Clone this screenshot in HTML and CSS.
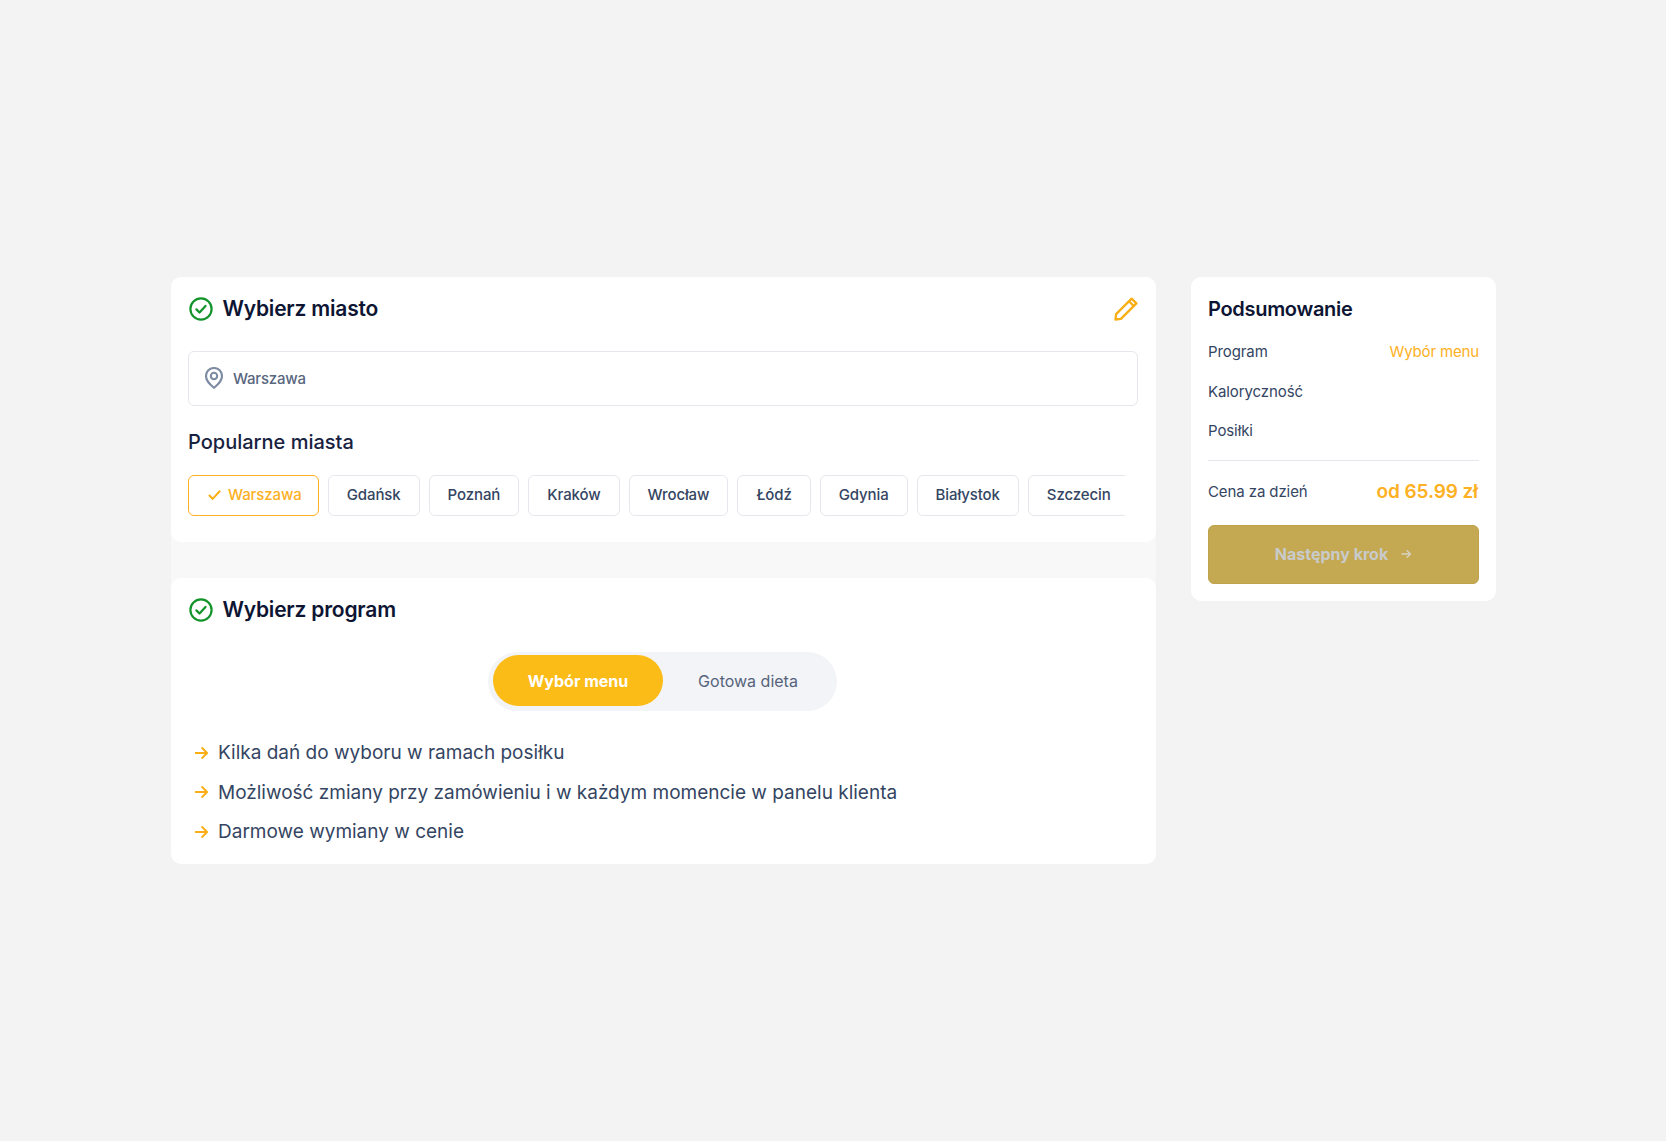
FILE: index.html
```html
<!DOCTYPE html>
<html lang="pl">
<head>
<meta charset="utf-8">
<title>Wybierz miasto</title>
<link rel="stylesheet" href="styles.css">
</head>
<body>
<div class="page">
  <main class="steps">
    <section class="card city">
      <header class="card-head">
        <svg class="check" viewBox="0 0 24 24" fill="none"><circle cx="12" cy="12" r="10.6"/><path d="M7.4 12.4l3.1 3.1 6-6.6"/></svg>
        <h2>Wybierz miasto</h2>
        <svg class="pencil" viewBox="0 0 24 24" fill="none"><path d="M1.5 22.5l.6-5.4L17.6 1.6l4.8 4.8L6.9 21.9z"/><path d="M15 4.2l4.8 4.8"/></svg>
      </header>
      <div class="search">
        <svg class="pin" viewBox="0 0 18 22" fill="none"><path d="M9 20.8C5 17.4 1 14.2 1 9a8 8 0 0 1 16 0c0 5.2-4 8.4-8 11.8z"/><circle cx="9" cy="9" r="3.2"/></svg>
        <span>Warszawa</span>
      </div>
      <h3>Popularne miasta</h3>
      <div class="chips">
        <span class="chip active"><svg viewBox="0 0 16 16" fill="none"><path d="M2 8.6l4 4L14 4"/></svg>Warszawa</span>
        <span class="chip">Gdańsk</span>
        <span class="chip">Poznań</span>
        <span class="chip">Kraków</span>
        <span class="chip">Wrocław</span>
        <span class="chip">Łódź</span>
        <span class="chip">Gdynia</span>
        <span class="chip">Białystok</span>
        <span class="chip">Szczecin</span>
      </div>
    </section>
    <section class="card program">
      <header class="card-head">
        <svg class="check" viewBox="0 0 24 24" fill="none"><circle cx="12" cy="12" r="10.6"/><path d="M7.4 12.4l3.1 3.1 6-6.6"/></svg>
        <h2>Wybierz program</h2>
      </header>
      <div class="toggle-row">
        <div class="toggle">
          <span class="tab on">Wybór menu</span>
          <span class="tab">Gotowa dieta</span>
        </div>
      </div>
      <ul class="perks">
        <li><svg viewBox="0 0 14 14" fill="none"><path d="M1 7h12M7.6 1.4L13 7l-5.4 5.6"/></svg>Kilka dań do wyboru w ramach posiłku</li>
        <li><svg viewBox="0 0 14 14" fill="none"><path d="M1 7h12M7.6 1.4L13 7l-5.4 5.6"/></svg>Możliwość zmiany przy zamówieniu i w każdym momencie w panelu klienta</li>
        <li><svg viewBox="0 0 14 14" fill="none"><path d="M1 7h12M7.6 1.4L13 7l-5.4 5.6"/></svg>Darmowe wymiany w cenie</li>
      </ul>
    </section>
  </main>
  <aside class="card summary">
    <h2>Podsumowanie</h2>
    <div class="row"><span>Program</span><span class="accent">Wybór menu</span></div>
    <div class="row"><span>Kaloryczność</span></div>
    <div class="row"><span>Posiłki</span></div>
    <div class="price"><span>Cena za dzień</span><strong>od 65.99 zł</strong></div>
    <div class="next">Następny krok<svg viewBox="0 0 12 12" fill="none"><path d="M1.5 6h9M6.6 2.2L10.5 6 6.6 9.8"/></svg></div>
  </aside>
</div>
</body>
</html>
```
FILE: styles.css
```css
* { box-sizing: border-box; }
html, body { margin: 0; height: 100%; }
body {
  background: #f3f3f3;
  font-family: Inter, "Noto Sans", sans-serif;
  color: #344054;
}
h2, h3, ul { margin: 0; padding: 0; }
.page {
  display: flex;
  align-items: flex-start;
  gap: 35px;
  padding: 277px 170px 0 171px;
}
.steps {
  width: 985px;
  flex: none;
  display: flex;
  flex-direction: column;
  gap: 36px;
  background: #f8f8f8;
  border-radius: 10px;
}
.card { background: #fff; border-radius: 10px; }
.city { height: 265px; padding: 17px 18px 0 17px; }
.program { height: 286px; padding: 17px 18px 0 17px; }
.card-head {
  display: flex;
  align-items: center;
  height: 30px;
}
.card-head h2 {
  font-size: 21px;
  line-height: 30px;
  font-weight: 600;
  color: #0d1533;
  margin-left: 9.5px;
  letter-spacing: -.2px;
}
.check { width: 24px; height: 24px; margin-left: 1px; }
.check circle, .check path { stroke: #12942b; stroke-width: 2.2; stroke-linecap: round; stroke-linejoin: round; }
.pencil { width: 24px; height: 24px; margin-left: auto; }
.pencil path { stroke: #f9ae14; stroke-width: 2.3; stroke-linejoin: round; }
.search {
  display: flex;
  align-items: center;
  height: 55px;
  margin-top: 27px;
  padding-left: 16px;
  padding-bottom: 1px;
  border: 1px solid #e4e7ec;
  border-radius: 6px;
  font-size: 15px;
  font-weight: 500;
  letter-spacing: -.2px;
  color: #58667e;
}
.pin { width: 18px; height: 22px; margin-right: 10px; }
.pin path, .pin circle { stroke: #7d8ba3; stroke-width: 2.1; }
.city h3 {
  font-size: 20px;
  line-height: 28px;
  font-weight: 500;
  color: #17223f;
  margin-top: 22px;
}
.chips {
  display: flex;
  gap: 9px;
  width: 937px;
  margin-top: 19px;
  overflow: hidden;
}
.chip {
  flex: none;
  display: flex;
  align-items: center;
  justify-content: center;
  height: 41px;
  padding: 0 18px 2px;
  border: 1px solid #e4e7ec;
  border-radius: 6px;
  font-size: 15px;
  font-weight: 500;
  letter-spacing: -.1px;
  color: #344562;
}
.chip.active { border: 1.5px solid #fdb022; color: #fdb022; padding: 0 16px 2px 18px; }
.chip svg { width: 15px; height: 15px; margin-right: 6px; }
.chip svg path { stroke: #f9ae14; stroke-width: 2.1; }
.toggle-row { display: flex; justify-content: center; margin-top: 27px; padding-right: 1px; }
.toggle {
  display: flex;
  width: 349px;
  height: 59px;
  padding: 3px 4px 5px 5px;
  background: #f2f4f7;
  border-radius: 30px;
}
.tab {
  flex: 1;
  display: flex;
  align-items: center;
  justify-content: center;
  border-radius: 26px;
  font-size: 16px;
  color: #56637b;
}
.tab.on { background: #fcbc17; color: #fff; font-weight: 700; }
.perks { list-style: none; margin-top: 22px; }
.perks li {
  display: flex;
  align-items: center;
  height: 39.5px;
  font-size: 19px;
  color: #344562;
}
.perks svg { width: 14px; height: 14px; margin: 0 10px 0 6px; }
.perks svg path { stroke: #f9ae14; stroke-width: 2; }
.summary { width: 305px; height: 324px; flex: none; padding: 17px 17px 0; }
.summary h2 { font-size: 20px; line-height: 30px; font-weight: 600; letter-spacing: -.3px; color: #0d1533; }
.row {
  display: flex;
  justify-content: space-between;
  align-items: center;
  height: 39.5px;
  font-size: 15px;
  letter-spacing: -.1px;
  color: #344562;
}
.row:first-of-type { margin-top: 8px; }
.accent { color: #fdb022; letter-spacing: -.15px; }
.price {
  display: flex;
  justify-content: space-between;
  align-items: center;
  height: 65px;
  margin-top: 9.5px;
  padding-bottom: 3px;
  border-top: 1px solid #e4e7ec;
  font-size: 15px;
  letter-spacing: -.1px;
  color: #344562;
}
.price strong { font-size: 19px; font-weight: 600; letter-spacing: -.1px; color: #fdb022; margin-right: 1px; }
.next {
  display: flex;
  align-items: center;
  justify-content: center;
  height: 59px;
  padding-bottom: 1px;
  background: #c4a852;
  border: 1px solid #bfa24c;
  border-radius: 6px;
  font-size: 16px;
  font-weight: 700;
  color: #c9cbcb;
}
.next svg { width: 12px; height: 12px; margin-left: 12px; }
.next svg path { stroke: #d6d3c4; stroke-width: 1.3; }
```
